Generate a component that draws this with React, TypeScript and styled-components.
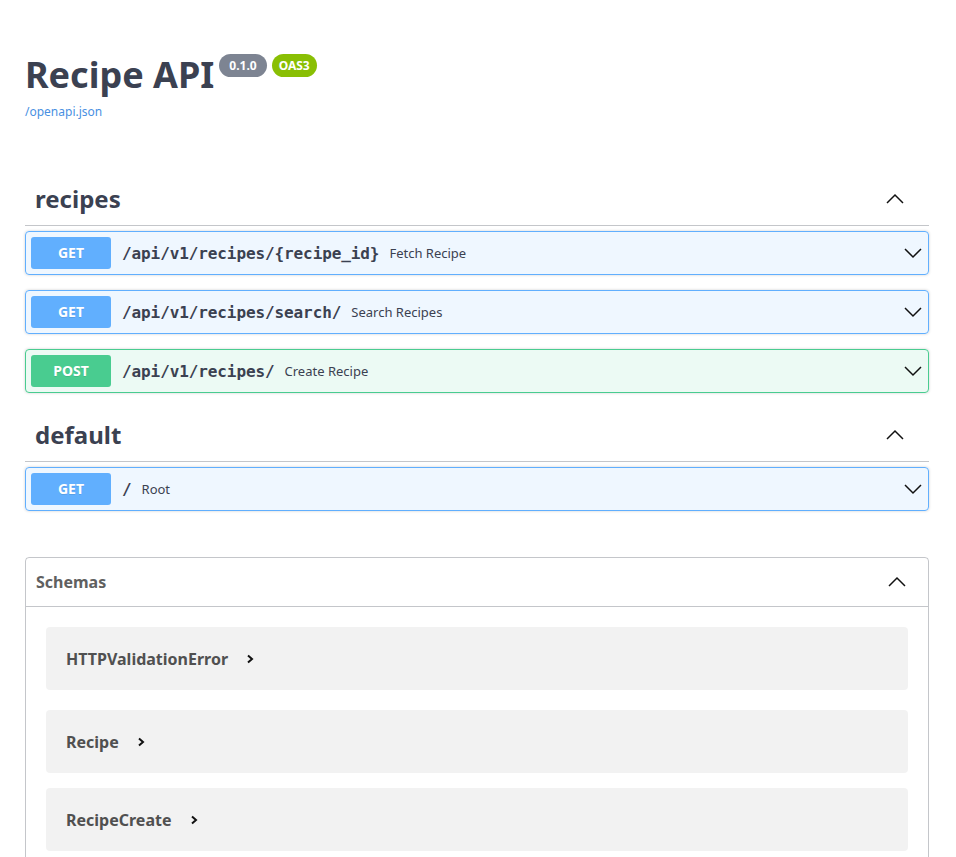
import React from "react";
import styled, { createGlobalStyle, css } from "styled-components";

const GlobalStyle = createGlobalStyle`
  html, body { margin: 0; padding: 0; background: #fff; }
  body { font-family: "Noto Sans", "Open Sans", sans-serif; color: #3b4151; }
  * { box-sizing: border-box; }
`;

const Page = styled.div`
  padding: 0 27px 40px 25px;
`;

const Info = styled.div`
  margin: 50px 0 52px;
`;

const TitleRow = styled.div`
  display: flex;
  align-items: flex-start;
  gap: 5px;
`;

const Title = styled.h2`
  margin: 0;
  font-size: 36px;
  line-height: 49px;
  font-weight: 700;
  color: #3b4151;
`;

const Badge = styled.span<{ $bg: string; $px: number }>`
  margin-top: 4px;
  display: inline-block;
  background: ${(p) => p.$bg};
  color: #fff;
  font-size: 12px;
  font-weight: 700;
  line-height: 17px;
  padding: 3px ${(p) => p.$px}px;
  border-radius: 57px;
`;

const Badges = styled.div`
  display: flex;
  gap: 5px;
`;

const SpecLink = styled.a`
  display: block;
  margin-top: 4px;
  font-size: 12px;
  line-height: 17px;
  color: #4990e2;
  text-decoration: none;
`;

const TagSection = styled.section`
  margin-bottom: 2px;
`;

const TagHeader = styled.h3`
  margin: 0 0 5px;
  display: flex;
  align-items: center;
  justify-content: space-between;
  padding: 10px 24px 10px 10px;
  border-bottom: 1px solid rgba(59, 65, 81, 0.3);
  font-size: 24px;
  line-height: 33px;
  font-weight: 700;
  color: #3b4151;
`;

const methodColors = {
  GET: { border: "#61affe", bg: "rgba(97,175,254,.1)" },
  POST: { border: "#49cc90", bg: "rgba(73,204,144,.1)" },
};

type Method = keyof typeof methodColors;

const Opblock = styled.div<{ $method: Method }>`
  margin: 0 0 15px;
  border-radius: 4px;
  box-shadow: 0 0 3px rgba(0, 0, 0, 0.19);
  ${(p) => css`
    border: 1px solid ${methodColors[p.$method].border};
    background: ${methodColors[p.$method].bg};
  `}
`;

const Summary = styled.div`
  display: flex;
  align-items: center;
  padding: 5px;
`;

const MethodBadge = styled.span<{ $method: Method }>`
  min-width: 80px;
  padding: 6px 0;
  text-align: center;
  font-size: 14px;
  line-height: 20px;
  font-weight: 700;
  color: #fff;
  border-radius: 3px;
  text-shadow: 0 1px 0 rgba(0, 0, 0, 0.1);
  background: ${(p) => methodColors[p.$method].border};
`;

const Path = styled.span`
  padding: 0 10px 0 11px;
  font-family: "DejaVu Sans Mono", monospace;
  font-size: 16px;
  letter-spacing: -0.1px;
  font-weight: 700;
  color: #3b4151;
`;

const Description = styled.span`
  flex: 1;
  font-size: 13px;
  color: #3b4151;
`;

const Chevron = styled.svg`
  width: 20px;
  height: 20px;
  flex: none;
`;

const Models = styled.section`
  margin: 46px 0 30px;
  border: 1px solid rgba(59, 65, 81, 0.3);
  border-radius: 4px;
`;

const ModelsHeader = styled.h4`
  margin: 0;
  display: flex;
  align-items: center;
  justify-content: space-between;
  padding: 10px 21px 10px 10px;
  height: 49px;
  border-bottom: 1px solid rgba(59, 65, 81, 0.3);
  font-size: 16px;
  font-weight: 700;
  color: #606060;
`;

const ModelList = styled.div`
  padding: 20px 0 5px;
`;

const ModelContainer = styled.div`
  margin: 0 20px 15px;
  height: 63px;
  display: flex;
  align-items: center;
  gap: 17px;
  padding: 0 20px;
  background: rgba(0, 0, 0, 0.05);
  border-radius: 4px;
  &:first-child {
    margin-bottom: 20px;
  }
`;

const ModelTitle = styled.span`
  font-size: 16px;
  font-weight: 700;
  color: #505050;
`;

const SmallArrow = styled.svg`
  width: 10px;
  height: 12px;
`;

const Arrow = ({ up }: { up?: boolean }) => (
  <Chevron viewBox="0 0 20 20">
    <polyline
      points={up ? "2,14 10,6 18,14" : "2,6 10,14 18,6"}
      fill="none"
      stroke="#111"
      strokeWidth="1.5"
    />
  </Chevron>
);

type Op = { method: Method; path: string; desc: string };

const tags: { name: string; ops: Op[] }[] = [
  {
    name: "recipes",
    ops: [
      { method: "GET", path: "/api/v1/recipes/{recipe_id}", desc: "Fetch Recipe" },
      { method: "GET", path: "/api/v1/recipes/search/", desc: "Search Recipes" },
      { method: "POST", path: "/api/v1/recipes/", desc: "Create Recipe" },
    ],
  },
  {
    name: "default",
    ops: [{ method: "GET", path: "/", desc: "Root" }],
  },
];

const models = ["HTTPValidationError", "Recipe", "RecipeCreate", "ValidationError"];

export default function App() {
  return (
    <>
      <GlobalStyle />
      <Page>
        <Info>
          <TitleRow>
            <Title>Recipe API</Title>
            <Badges>
              <Badge $bg="#7d8492" $px={10}>0.1.0</Badge>
              <Badge $bg="#89bf04" $px={7}>OAS3</Badge>
            </Badges>
          </TitleRow>
          <SpecLink href="#">/openapi.json</SpecLink>
        </Info>

        {tags.map((t) => (
          <TagSection key={t.name}>
            <TagHeader>
              <span>{t.name}</span>
              <Arrow up />
            </TagHeader>
            {t.ops.map((op) => (
              <Opblock key={op.method + op.path} $method={op.method}>
                <Summary>
                  <MethodBadge $method={op.method}>{op.method}</MethodBadge>
                  <Path>{op.path}</Path>
                  <Description>{op.desc}</Description>
                  <Arrow />
                </Summary>
              </Opblock>
            ))}
          </TagSection>
        ))}

        <Models>
          <ModelsHeader>
            <span>Schemas</span>
            <Arrow up />
          </ModelsHeader>
          <ModelList>
            {models.map((m) => (
              <ModelContainer key={m}>
                <ModelTitle>{m}</ModelTitle>
                <SmallArrow viewBox="0 0 10 12">
                  <polyline points="3,2.5 7,6 3,9.5" fill="none" stroke="#111" strokeWidth="2" />
                </SmallArrow>
              </ModelContainer>
            ))}
          </ModelList>
        </Models>
      </Page>
    </>
  );
}
